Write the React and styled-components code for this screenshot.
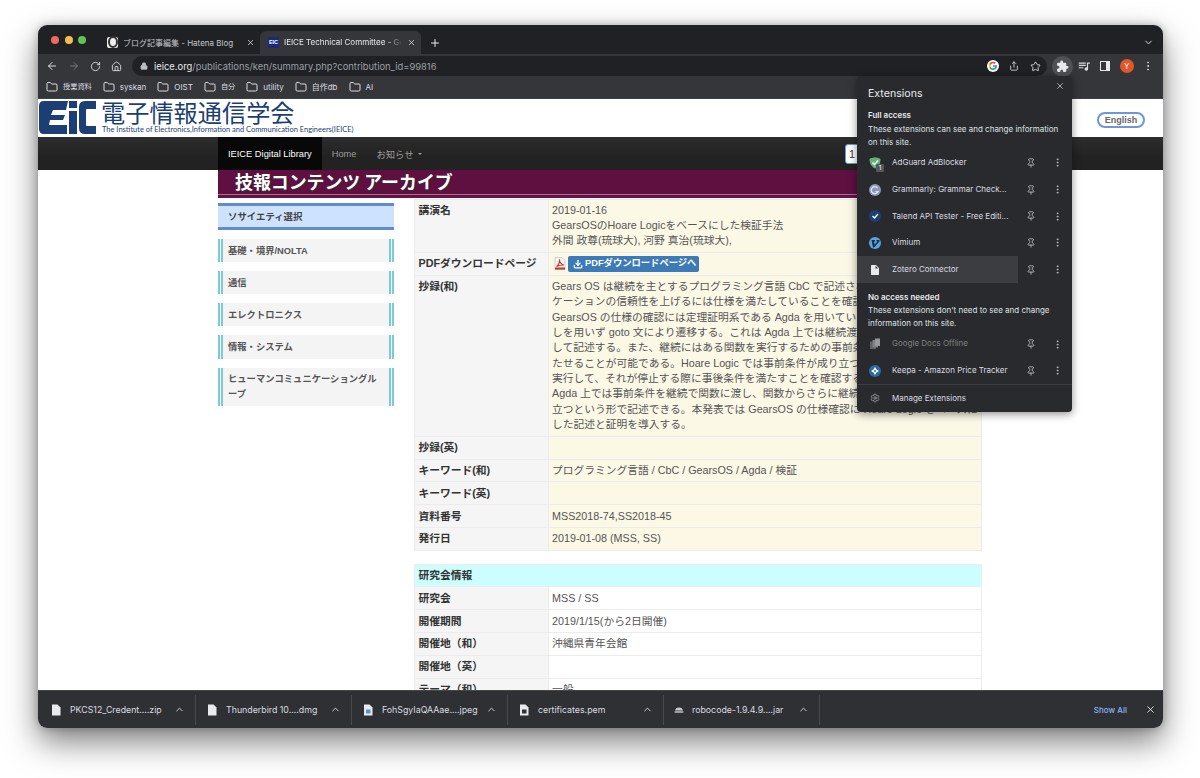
import React from 'react'
import styled, { createGlobalStyle } from 'styled-components'
import {
  ArrowLeft,
  ArrowRight,
  ChevronDown,
  ChevronUp,
  Download,
  Folder,
  House,
  Lock,
  MoreVertical,
  Pin,
  Plus,
  RotateCw,
  Settings,
  Share,
  Star,
  X,
} from 'lucide-react'
import { MdExtension, MdInsertDriveFile, MdQueueMusic } from 'react-icons/md'

const sans = '"Liberation Sans", "Noto Sans CJK JP", sans-serif'
const ui = 'Inter, "Noto Sans CJK JP", sans-serif'

const Global = createGlobalStyle`
  html, body {
    margin: 0;
    background: #fff;
  }
  * {
    box-sizing: border-box;
  }
`

const Stage = styled.div`
  height: 778px;
  padding: 25px 37px 0 38px;
  overflow: hidden;
`

const Win = styled.div`
  position: relative;
  height: 703px;
  display: flex;
  flex-direction: column;
  border-radius: 9px;
  overflow: hidden;
  font-family: ${sans};
`

const Shadow = styled.div`
  border-radius: 9px;
  box-shadow: 0 14px 32px rgba(0, 0, 0, 0.5), 0 0 8px rgba(0, 0, 0, 0.25);
`

/* tab strip */
const TabStrip = styled.div`
  flex: none;
  height: 29px;
  display: flex;
  align-items: flex-end;
  background: #202124;
  color: #e8eaed;
`

const Lights = styled.div`
  width: 61px;
  height: 29px;
  padding-left: 13px;
  display: flex;
  align-items: center;
  gap: 5.5px;
`

const Light = styled.span`
  width: 8px;
  height: 8px;
  border-radius: 50%;
  background: ${p => p.$color};
`

const Tab = styled.div`
  width: 161px;
  height: 23px;
  padding: 0 5px 1px 8px;
  display: flex;
  align-items: center;
  gap: 5px;
  border-radius: 6px 6px 0 0;
  background: ${p => (p.$active ? '#35363a' : 'transparent')};
`

const TabTitle = styled.span`
  flex: 1;
  overflow: hidden;
  white-space: nowrap;
  font: 8px ${ui};
  color: ${p => (p.$active ? '#e8eaed' : '#c4c7cc')};
  ${p => p.$active && 'mask-image: linear-gradient(90deg, #000 88%, transparent);'}
`

const HatenaIcon = styled.span`
  flex: none;
  width: 11px;
  height: 11px;
  display: flex;
  align-items: center;
  justify-content: center;
  border-radius: 2px;
  background: #eee;
  &::after {
    content: '';
    width: 6px;
    height: 8px;
    border: 2px solid #333;
    border-radius: 50%;
  }
`

const EicIcon = styled.span`
  flex: none;
  width: 11px;
  height: 11px;
  display: flex;
  align-items: center;
  justify-content: center;
  background: #1a2a78;
  color: #fff;
  font: bold 5.5px ${sans};
`

const PlusBtn = styled.span`
  width: 28px;
  height: 23px;
  display: flex;
  align-items: center;
  justify-content: center;
`

const StripEnd = styled.span`
  width: 30px;
  height: 23px;
  margin-left: auto;
  display: flex;
  align-items: center;
  justify-content: center;
`

/* toolbar */
const Toolbar = styled.div`
  flex: none;
  height: 24px;
  padding: 0 4px 0 3.5px;
  display: flex;
  align-items: center;
  background: #35363a;
  color: #dadce0;
`

const ToolBtn = styled.span`
  flex: none;
  width: 21.5px;
  height: 21px;
  display: flex;
  align-items: center;
  justify-content: center;
  border-radius: 50%;
  color: ${p => p.$color || 'inherit'};
  background: ${p => (p.$on ? '#505155' : 'transparent')};
`

const Omnibox = styled.div`
  flex: 1;
  height: 20px;
  margin: 0 5px 0 4.5px;
  padding-left: 8px;
  display: flex;
  align-items: center;
  border-radius: 10px;
  background: #202124;
  color: #9aa0a6;
  font: 9.4px ${ui};
`

const Url = styled.span`
  margin-left: 6px;
  flex: 1;
  white-space: nowrap;
  b {
    font-weight: 400;
    color: #e8eaed;
  }
`

const Avatar = styled.span`
  width: 14px;
  height: 14px;
  display: flex;
  align-items: center;
  justify-content: center;
  border-radius: 50%;
  background: #e2562c;
  color: #fff;
  font: 8px ${ui};
`

const SidePanelIcon = styled.span`
  width: 10px;
  height: 10px;
  border: 1.5px solid #e8eaed;
  border-right-width: 4px;
`

/* bookmarks */
const Bookmarks = styled.div`
  flex: none;
  height: 21px;
  padding: 0 0 2px 8px;
  display: flex;
  align-items: center;
  gap: 11px;
  background: #35363a;
  border-bottom: 1px solid #3f4044;
  color: #dadce0;
  font: 8px/12px ${ui};
`

const Bookmark = styled.span`
  display: flex;
  align-items: center;
  gap: 5px;
  white-space: nowrap;
  font-size: ${p => (p.$cjk ? '7.2px' : '8px')};
`

/* page */
const Page = styled.div`
  flex: 1;
  min-height: 0;
  overflow: hidden;
  background: #fff;
`

const SiteHeader = styled.div`
  height: 38px;
  padding: 2px 18px 0 0;
  display: flex;
  align-items: flex-start;
`

const LogoText = styled.div`
  margin-left: 4px;
  margin-top: -1px;
  color: #1b3f74;
`

const LogoTitle = styled.div`
  font: 24.2px/25px "Noto Sans CJK JP", sans-serif;
  white-space: nowrap;
  margin-top: -1px;
`

const LogoSub = styled.div`
  font: 7.47px/10px Lato, sans-serif;
  white-space: nowrap;
  margin: 1px 0 0 1px;
`

const LangBtn = styled.span`
  margin: 11px 0 0 auto;
  width: 48px;
  height: 16px;
  display: flex;
  align-items: center;
  justify-content: center;
  border: 2px solid #6d97d6;
  border-radius: 8px;
  color: #666;
  font: bold 9px ${sans};
`

const Navbar = styled.div`
  height: 33px;
  padding-left: 180px;
  background: linear-gradient(#2d2d2d, #222 60%);
`

const NavInner = styled.div`
  width: 764px;
  height: 33px;
  display: flex;
  align-items: center;
  font-size: 9.3px;
  color: #9d9d9d;
`

const NavItem = styled.span`
  height: 33px;
  padding: 0 10px;
  display: flex;
  align-items: center;
  gap: 4px;
  white-space: nowrap;
  ${p => p.$active && 'background: #080808; color: #fff;'}
`

const Caret = styled.span`
  border: 2.5px solid transparent;
  border-top-color: #9d9d9d;
  border-bottom-width: 0;
`

const SearchStub = styled.span`
  width: 60px;
  height: 20px;
  margin: 0 77px 0 auto;
  padding-left: 3px;
  border: 1px solid #6d97d6;
  border-radius: 3px;
  background: #fff;
  color: #333;
  font-size: 10.75px;
  line-height: 18px;
`

const Container = styled.div`
  width: 764px;
  margin-left: 180px;
`

const Banner = styled.div`
  height: 28px;
  background: #5f0f40;
  border-bottom: 2px solid #6b1148;
`

const BannerTitle = styled.div`
  height: 25px;
  border-bottom: 1px solid #a9708f;
  padding-left: 17px;
  color: #fff;
  font: bold 17.9px/23px "Noto Sans CJK JP", sans-serif;
  white-space: nowrap;
  text-shadow: 1px 1px 0 #333;
`

const Columns = styled.div`
  display: flex;
  gap: 20px;
  align-items: flex-start;
`

const Sidebar = styled.div`
  width: 176px;
  flex: none;
  margin-top: 5px;
  display: flex;
  flex-direction: column;
  gap: 9px;
`

const SideHead = styled.div`
  height: 27px;
  padding: 0 0 1px 10px;
  display: flex;
  align-items: center;
  background: #cde3fd;
  border-top: 3px solid #5f8bd0;
  border-bottom: 3px solid #5f8bd0;
  color: #444;
  font-size: 9.4px;
  font-weight: bold;
`

const SideItem = styled.div`
  padding: 4.5px 4px 3.3px 5px;
  background: #f4f4f4;
  border-left: 5px double #7ccadb;
  border-right: 5px double #7ccadb;
  color: #555;
  font-size: 9.3px;
  line-height: 15.33px;
  font-weight: bold;
`

const Main = styled.div`
  width: 568px;
  flex: none;
  margin-top: 0.5px;
`

const Table = styled.table`
  width: 568px;
  margin-bottom: 12.6px;
  border-collapse: collapse;
  table-layout: fixed;
  font-size: 10.75px;
  line-height: 15.33px;
`

const LabelCol = styled.col`
  width: 134px;
`

const Th = styled.th`
  padding: 3.27px 3.5px;
  vertical-align: top;
  text-align: left;
  background: #f5f5f5;
  border: 1px solid #ececec;
  color: #333;
  font-weight: bold;
  white-space: nowrap;
`

const Td = styled.td`
  padding: 3.27px 3px;
  vertical-align: top;
  background: ${p => (p.$plain ? '#fff' : '#fcf8e6')};
  border: 1px solid #ececec;
  color: #555;
  overflow: hidden;
  white-space: nowrap;
`

const SectionRow = styled.th`
  padding: 3.27px 3.5px;
  text-align: left;
  background: #ccfdff;
  border: 1px solid #ececec;
  color: #333;
  font-weight: bold;
`

const PdfBtn = styled.span`
  height: 16px;
  padding: 0 3px 0 5px;
  display: inline-flex;
  align-items: center;
  gap: 2px;
  border-radius: 2px;
  background: #3d7ab8;
  color: #fff;
  font-size: 9.3px;
  font-weight: bold;
`

const PdfCell = styled.div`
  display: flex;
  align-items: center;
  gap: 2px;
  height: 15.33px;
  margin-left: 2px;
`

/* extensions popup */
const Popup = styled.div`
  position: absolute;
  left: 819px;
  top: 51px;
  width: 215px;
  height: 336px;
  padding-top: 11px;
  border-radius: 4px;
  background: #292a2d;
  box-shadow: 0 2px 8px rgba(0, 0, 0, 0.45);
  color: #e8eaed;
  font: 8px/13.3px ${ui};
`

const PopupClose = styled.span`
  position: absolute;
  right: 7px;
  top: 5px;
  color: #bdc1c6;
`

const PopupTitle = styled.div`
  padding-left: 11px;
  margin-bottom: 9.3px;
  font-size: 10.6px;
  line-height: 13px;
`

const SectionHead = styled.div`
  padding-left: 11px;
  margin-top: ${p => p.$top || 0}px;
  font-weight: 600;
`

const Desc = styled.div`
  padding-left: 11px;
  margin-bottom: 0.4px;
  color: #dfe1e5;
`

const ExtRow = styled.div`
  height: 26.7px;
  display: flex;
  align-items: center;
  color: #bdc1c6;
`

const ExtMain = styled.div`
  width: 161px;
  height: 100%;
  padding-left: 11px;
  display: flex;
  align-items: center;
  gap: 11px;
  background: ${p => (p.$hover ? '#3c3d40' : 'transparent')};
  color: ${p => (p.$muted ? '#7f8184' : '#dadce0')};
`

const ExtSlot = styled.span`
  width: ${p => p.$w}px;
  display: flex;
  justify-content: center;
`

const ExtIcon = styled.span`
  position: relative;
  flex: none;
  width: 13px;
  height: 13px;
  display: flex;
  align-items: center;
  justify-content: center;
`

const Badge = styled.span`
  position: absolute;
  right: -3px;
  bottom: -3px;
  width: 8px;
  height: 8px;
  display: flex;
  align-items: center;
  justify-content: center;
  border-radius: 1px;
  background: #55585c;
  color: #fff;
  font-size: 6px;
  line-height: 8px;
`

const Divider = styled.div`
  height: 1px;
  background: #3c3d40;
`

const ManageRow = styled(ExtMain)`
  width: 100%;
  height: 26px;
`

/* download shelf */
const Shelf = styled.div`
  flex: none;
  height: 38px;
  padding-left: 2px;
  display: flex;
  align-items: center;
  background: #2f3033;
  border-top: 1px solid #45464a;
  color: #dadce0;
  font: 8.8px ${ui};
`

const ShelfItem = styled.div`
  width: 156px;
  height: 30px;
  padding: 0 10px;
  display: flex;
  align-items: center;
  gap: 8px;
  border-right: 1px solid #494a4e;
`

const ShelfName = styled.span`
  flex: 1;
  white-space: nowrap;
`

const ShowAll = styled.span`
  margin-left: auto;
  margin-right: 10px;
  color: #8ab4f8;
  font-size: 8px;
  font-weight: 500;
`

const ShelfClose = styled.span`
  width: 26px;
  display: flex;
  justify-content: center;
  color: #e8eaed;
`

const tabs = [
  { title: 'ブログ記事編集 - Hatena Blog', Icon: HatenaIcon },
  { title: 'IEICE Technical Committee - Gears', Icon: EicIcon, active: true },
]

const bookmarks = [
  { name: '授業資料', cjk: true },
  { name: 'syskan' },
  { name: 'OIST' },
  { name: '自分', cjk: true },
  { name: 'utility' },
  { name: '自作db' },
  { name: 'AI' },
]

const sideItems = ['基礎・境界/NOLTA', '通信', 'エレクトロニクス', '情報・システム', 'ヒューマンコミュニケーショングループ']

const abstract = [
  'Gears OS は継続を主とするプログラミング言語 CbC で記述されている。OS やアプリ',
  'ケーションの信頼性を上げるには仕様を満たしていることを確認する必要がある。',
  'GearsOS の仕様の確認には定理証明系である Agda を用いている。CbC の継続は関数呼び出',
  'しを用いず goto 文により遷移する。これは Agda 上では継続渡しスタイルの関数と',
  'して記述する。また、継続にはある関数を実行するための事前条件と事後条件を持',
  'たせることが可能である。Hoare Logic では事前条件が成り立つときにある関数を',
  '実行して、それが停止する際に事後条件を満たすことを確認する。これを',
  'Agda 上では事前条件を継続で関数に渡し、関数からさらに継続へ事後条件が成り',
  '立つという形で記述できる。本発表では GearsOS の仕様確認に Hoare Logic をベースに',
  'した記述と証明を導入する。',
]

const infoRows = [
  ['抄録(英)', ''],
  ['キーワード(和)', 'プログラミング言語 / CbC / GearsOS / Agda / 検証'],
  ['キーワード(英)', ''],
  ['資料番号', 'MSS2018-74,SS2018-45'],
  ['発行日', '2019-01-08 (MSS, SS)'],
]

const meetingRows = [
  ['研究会', 'MSS / SS'],
  ['開催期間', '2019/1/15(から2日開催)'],
  ['開催地（和）', '沖縄県青年会館'],
  ['開催地（英）', ''],
  ['テーマ（和）', '一般'],
]

const downloads = [
  { name: 'PKCS12_Credent....zip', icon: 'file' },
  { name: 'Thunderbird 10....dmg', icon: 'file' },
  { name: 'FohSgyIaQAAae....jpeg', icon: 'image' },
  { name: 'certificates.pem', icon: 'cert' },
  { name: 'robocode-1.9.4.9....jar', icon: 'jar' },
]

function EicLogo() {
  return (
    <svg width="58" height="33" viewBox="0 0 58 33" style={{ flex: 'none', marginLeft: 1 }}>
      <path fill="#1b3f74" d="M5 0H29L27 9H14L12 14H26L24 19H11L10 24H28V33H5Q0 33 0 28V5Q0 0 5 0Z" />
      <path fill="#1b3f74" d="M30 0h8v7h-8zM30 10h8v23h-8z" />
      <path fill="#1b3f74" d="M46 0h11v8H48q-1 0-1 1v15q0 1 1 1h9v8H46q-6 0-6-6V6q0-6 6-6z" />
    </svg>
  )
}

function GoogleIcon() {
  return (
    <svg width="12" height="12" viewBox="0 0 24 24">
      <circle cx="12" cy="12" r="12" fill="#fff" />
      <path fill="#4285f4" d="M20 12.2c0-.6 0-1.100-.2-1.700H12v3.200h4.500c-.2 1-.8 1.900-1.700 2.500l2.700 2.100c1.600-1.500 2.500-3.600 2.500-6.100z" />
      <path fill="#34a853" d="M12 20c2.200 0 4-.7 5.500-2l-2.700-2.100c-.7.5-1.700.8-2.800.8-2.100 0-3.900-1.400-4.600-3.400L4.600 15.500C6 18.200 8.800 20 12 20z" />
      <path fill="#fbbc05" d="M7.400 13.300c-.4-1-.4-2.400 0-3.300L4.600 7.900c-1 2.100-1 5.500 0 7.600z" />
      <path fill="#ea4335" d="M12 6.700c1.200 0 2.300.4 3.100 1.200l2.400-2.400C16 4 14.200 3.600 12 3.600c-3.200 0-6 1.800-7.400 4.300L7.400 10c.7-2 2.500-3.300 4.600-3.300z" />
    </svg>
  )
}

function PdfIcon() {
  return (
    <svg width="12" height="13" viewBox="0 0 12 13">
      <path fill="#f4f4f4" stroke="#bbb" strokeWidth="0.6" d="M1 .5h7l3 3v9H1z" />
      <path fill="none" stroke="#c8312a" strokeWidth="1.100" d="M2.500 9.500C5 8 6 4 5.500 2.500 5.200 5 7.500 8 10 8c-2 0-6 .6-7.500 1.500z" />
      <rect x="1" y="10.500" width="10" height="2" fill="#c8312a" />
    </svg>
  )
}

function ShieldIcon() {
  return (
    <svg width="12" height="12" viewBox="0 0 24 24">
      <path fill="#67b279" d="M12 1C8 1 4 2 1 4c0 8 3 15 11 19 8-4 11-11 11-19-3-2-7-3-11-3z" />
      <path fill="none" stroke="#fff" strokeWidth="2.500" d="M7 11l4 4 7-8" />
    </svg>
  )
}

function GrammarlyIcon() {
  return (
    <svg width="12" height="12" viewBox="0 0 24 24">
      <circle cx="12" cy="12" r="12" fill="#8e97b8" />
      <path fill="none" stroke="#e4e7f0" strokeWidth="2.500" d="M17 8a7 7 0 1 0 1 7h-5" />
    </svg>
  )
}

function TalendIcon() {
  return (
    <svg width="12" height="12" viewBox="0 0 24 24">
      <circle cx="12" cy="12" r="12" fill="#1c3f73" />
      <path fill="none" stroke="#fff" strokeWidth="2.500" d="M7 12l4 4 7-8" />
    </svg>
  )
}

function VimiumIcon() {
  return (
    <svg width="12" height="12" viewBox="0 0 24 24">
      <circle cx="12" cy="12" r="12" fill="#5ba4dc" />
      <path fill="#16314d" d="M5 6h7v3h-2l1 6 6-6h-2V6h6v3L10 21H8z" />
    </svg>
  )
}

function DocsIcon() {
  return (
    <svg width="12" height="12" viewBox="0 0 24 24">
      <path fill="#5f6266" d="M2 7h12v15H2z" />
      <path fill="#7c7f83" d="M7 4h11v15H7z" />
      <path fill="#95989c" d="M12 1h10v15H12z" />
    </svg>
  )
}

function KeepaIcon() {
  return (
    <svg width="12" height="12" viewBox="0 0 24 24">
      <circle cx="12" cy="12" r="12" fill="#2b6ca3" />
      <path fill="#fff" d="M12 4l3 5 5 3-5 3-3 5-3-5-5-3 5-3z" />
      <circle cx="12" cy="12" r="2" fill="#2b6ca3" />
    </svg>
  )
}

function JarIcon() {
  return (
    <svg width="10" height="10" viewBox="0 0 24 24">
      <path fill="#c4c7cc" d="M3 13a9 7 0 0 1 18 0z" />
      <rect x="1" y="14" width="22" height="5" rx="2.500" fill="#9a9da1" />
    </svg>
  )
}

function FileGlyph({ kind }) {
  if (kind === 'jar') return <JarIcon />
  const inner = { image: '#5b8fd6', cert: '#2f3033', file: '#8b8d91' }[kind]
  return (
    <svg width="12" height="12" viewBox="0 0 24 24" style={{ flex: 'none' }}>
      <path fill="#e8eaed" d="M4 1h11l6 6v16H4z" />
      {kind === 'file' ? null : <rect x="8" y="11" width="9" height="8" fill={inner} />}
    </svg>
  )
}

function ExtensionRow({ icon, name, hover, muted, badge }) {
  return (
    <ExtRow>
      <ExtMain $hover={hover} $muted={muted}>
        <ExtIcon>
          {icon}
          {badge ? <Badge>{badge}</Badge> : null}
        </ExtIcon>
        <span>{name}</span>
      </ExtMain>
      <ExtSlot $w={26}>
        <Pin size={10} />
      </ExtSlot>
      <ExtSlot $w={27}>
        <MoreVertical size={11} />
      </ExtSlot>
    </ExtRow>
  )
}

function ExtensionsPopup() {
  return (
    <Popup>
      <PopupClose>
        <X size={10} />
      </PopupClose>
      <PopupTitle>Extensions</PopupTitle>
      <SectionHead>Full access</SectionHead>
      <Desc>
        These extensions can see and change information
        <br />
        on this site.
      </Desc>
      <ExtensionRow icon={<ShieldIcon />} name="AdGuard AdBlocker" badge="1" />
      <ExtensionRow icon={<GrammarlyIcon />} name="Grammarly: Grammar Check..." />
      <ExtensionRow icon={<TalendIcon />} name="Talend API Tester - Free Editi..." />
      <ExtensionRow icon={<VimiumIcon />} name="Vimium" />
      <ExtensionRow icon={<MdInsertDriveFile size={12} color="#e8eaed" />} name="Zotero Connector" hover />
      <SectionHead $top={7.5}>No access needed</SectionHead>
      <Desc>
        These extensions don't need to see and change
        <br />
        information on this site.
      </Desc>
      <ExtensionRow icon={<DocsIcon />} name="Google Docs Offline" muted />
      <ExtensionRow icon={<KeepaIcon />} name="Keepa - Amazon Price Tracker" />
      <Divider />
      <ManageRow>
        <ExtIcon>
          <Settings size={10} color="#9aa0a6" />
        </ExtIcon>
        <span>Manage Extensions</span>
      </ManageRow>
    </Popup>
  )
}

export default function App() {
  return (
    <Stage>
      <Global />
      <Shadow>
        <Win>
          <TabStrip>
            <Lights>
              <Light $color="#ed6a5e" />
              <Light $color="#f4bf4f" />
              <Light $color="#61c554" />
            </Lights>
            {tabs.map(({ title, Icon, active }) => (
              <Tab key={title} $active={active}>
                <Icon>{active ? 'EIC' : null}</Icon>
                <TabTitle $active={active}>{title}</TabTitle>
                <X size={9} />
              </Tab>
            ))}
            <PlusBtn>
              <Plus size={12} />
            </PlusBtn>
            <StripEnd>
              <ChevronDown size={11} />
            </StripEnd>
          </TabStrip>

          <Toolbar>
            <ToolBtn>
              <ArrowLeft size={12} />
            </ToolBtn>
            <ToolBtn $color="#75777b">
              <ArrowRight size={12} />
            </ToolBtn>
            <ToolBtn>
              <RotateCw size={11} />
            </ToolBtn>
            <ToolBtn>
              <House size={11} />
            </ToolBtn>
            <Omnibox>
              <Lock size={8} fill="#bdc1c6" color="#bdc1c6" />
              <Url>
                <b>ieice.org</b>/publications/ken/summary.php?contribution_id=99816
              </Url>
              <ToolBtn>
                <GoogleIcon />
              </ToolBtn>
              <ToolBtn $color="#dadce0">
                <Share size={10} />
              </ToolBtn>
              <ToolBtn $color="#dadce0">
                <Star size={11} />
              </ToolBtn>
            </Omnibox>
            <ToolBtn $on $color="#e8eaed">
              <MdExtension size={13} />
            </ToolBtn>
            <ToolBtn>
              <MdQueueMusic size={14} />
            </ToolBtn>
            <ToolBtn>
              <SidePanelIcon />
            </ToolBtn>
            <ToolBtn>
              <Avatar>Y</Avatar>
            </ToolBtn>
            <ToolBtn>
              <MoreVertical size={12} />
            </ToolBtn>
          </Toolbar>

          <Bookmarks>
            {bookmarks.map(({ name, cjk }) => (
              <Bookmark key={name} $cjk={cjk}>
                <Folder size={12} />
                {name}
              </Bookmark>
            ))}
          </Bookmarks>

          <Page>
            <SiteHeader>
              <EicLogo />
              <LogoText>
                <LogoTitle>電子情報通信学会</LogoTitle>
                <LogoSub>The Institute of Electronics,Information and Communication Engineers(IEICE)</LogoSub>
              </LogoText>
              <LangBtn>English</LangBtn>
            </SiteHeader>
            <Navbar>
              <NavInner>
                <NavItem $active>IEICE Digital Library</NavItem>
                <NavItem>Home</NavItem>
                <NavItem>
                  お知らせ <Caret />
                </NavItem>
                <SearchStub>1</SearchStub>
              </NavInner>
            </Navbar>
            <Container>
              <Banner>
                <BannerTitle>技報コンテンツ アーカイブ</BannerTitle>
              </Banner>
              <Columns>
                <Sidebar>
                  <SideHead>ソサイエティ選択</SideHead>
                  {sideItems.map(item => (
                    <SideItem key={item}>{item}</SideItem>
                  ))}
                </Sidebar>
                <Main>
                  <Table>
                    <colgroup>
                      <LabelCol />
                      <col />
                    </colgroup>
                    <tbody>
                      <tr>
                        <Th>講演名</Th>
                        <Td>
                          2019-01-16
                          <br />
                          GearsOSのHoare Logicをベースにした検証手法
                          <br />
                          外間 政尊(琉球大), 河野 真治(琉球大),
                        </Td>
                      </tr>
                      <tr>
                        <Th>PDFダウンロードページ</Th>
                        <Td>
                          <PdfCell>
                            <PdfIcon />
                            <PdfBtn>
                              <Download size={10} strokeWidth={3} />
                              PDFダウンロードページへ
                            </PdfBtn>
                          </PdfCell>
                        </Td>
                      </tr>
                      <tr>
                        <Th>抄録(和)</Th>
                        <Td>
                          {abstract.map(line => (
                            <div key={line}>{line}</div>
                          ))}
                        </Td>
                      </tr>
                      {infoRows.map(([label, value]) => (
                        <tr key={label}>
                          <Th>{label}</Th>
                          <Td>{value || '\u00a0'}</Td>
                        </tr>
                      ))}
                    </tbody>
                  </Table>
                  <Table>
                    <colgroup>
                      <LabelCol />
                      <col />
                    </colgroup>
                    <tbody>
                      <tr>
                        <SectionRow colSpan={2}>研究会情報</SectionRow>
                      </tr>
                      {meetingRows.map(([label, value]) => (
                        <tr key={label}>
                          <Th>{label}</Th>
                          <Td $plain>{value || '\u00a0'}</Td>
                        </tr>
                      ))}
                    </tbody>
                  </Table>
                </Main>
              </Columns>
            </Container>
          </Page>

          <Shelf>
            {downloads.map(d => (
              <ShelfItem key={d.name}>
                <FileGlyph kind={d.icon} />
                <ShelfName>{d.name}</ShelfName>
                <ChevronUp size={11} />
              </ShelfItem>
            ))}
            <ShowAll>Show All</ShowAll>
            <ShelfClose>
              <X size={11} />
            </ShelfClose>
          </Shelf>

          <ExtensionsPopup />
        </Win>
      </Shadow>
    </Stage>
  )
}
